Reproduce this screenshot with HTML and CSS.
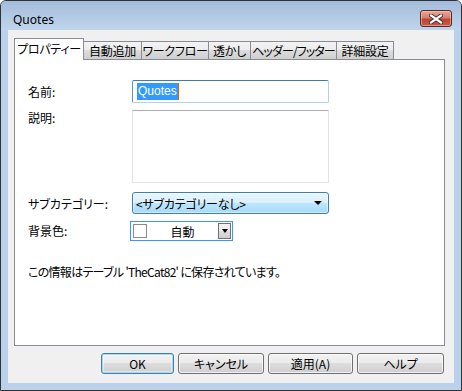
FILE: index.html
```html
<!DOCTYPE html>
<html lang="ja">
<head>
  <meta charset="UTF-8">
  <title>Quotes</title>
  <link rel="stylesheet" href="styles.css">
</head>
<body>
  <div class="window">
    <div class="titlebar">
      <span class="title">Quotes</span>
      <div class="close-btn">
        <svg width="14" height="10" viewBox="0 0 14 10">
          <path d="M2 1.5 L12 8.5 M12 1.5 L2 8.5" stroke="#3b2a2a" stroke-width="4" stroke-linecap="square" fill="none"/>
          <path d="M2 1.5 L12 8.5 M12 1.5 L2 8.5" stroke="#ffffff" stroke-width="2.2" stroke-linecap="square" fill="none"/>
        </svg>
      </div>
    </div>

    <div class="client">
      <div class="tabs">
        <div class="tab active tab-props">プロパティー</div>
        <div class="tab tab-auto">自動追加</div>
        <div class="tab tab-flow">ワークフロー</div>
        <div class="tab tab-mark">透かし</div>
        <div class="tab tab-head">ヘッダー/フッター</div>
        <div class="tab tab-more">詳細設定</div>
      </div>

      <div class="panel">
        <div class="form">
          <div class="row">
            <span class="label">名前:</span>
            <div class="input focused"><span class="selected">Quotes</span><span class="caret"></span></div>
          </div>
          <div class="row row-top">
            <span class="label">説明:</span>
            <div class="textarea"></div>
          </div>
          <div class="row">
            <span class="label label-low">サブカテゴリー:</span>
            <div class="select">
              <span>&lt;サブカテゴリーなし&gt;</span>
              <span class="arrow"></span>
            </div>
          </div>
          <div class="row">
            <span class="label">背景色:</span>
            <div class="color-pick">
              <span class="swatch"></span>
              <span class="color-name">自動</span>
              <span class="drop"><span class="arrow"></span></span>
            </div>
          </div>
        </div>
        <p class="info">この情報はテーブル 'TheCat82' に保存されています。</p>
      </div>

      <div class="buttons">
        <div class="btn btn-ok default">OK</div>
        <div class="btn btn-cancel">キャンセル</div>
        <div class="btn btn-apply">適用(A)</div>
        <div class="btn btn-help">ヘルプ</div>
      </div>
    </div>
  </div>
</body>
</html>
```

FILE: styles.css
```css
body {
  margin: 0;
  padding: 0;
  background-color: #ffffff;
  font-family: "Noto Sans CJK JP", "Noto Sans", sans-serif;
  font-size: 12px;
  color: #000;
}
.window {
  width: 462px;
  height: 391px;
  box-sizing: border-box;
  border: 1px solid #2f3338;
  border-radius: 6px 6px 0 0;
  background-color: #b9d1ea;
  display: flex;
  flex-direction: column;
}
.titlebar {
  height: 29px;
  flex: none;
  display: flex;
  justify-content: space-between;
  align-items: flex-start;
  border-radius: 5px 5px 0 0;
  background: linear-gradient(to bottom, #a3bcd9 0%, #b2c9e3 50%, #bfd5ec 100%);
}
.title {
  font-family: "Noto Sans", sans-serif;
  font-size: 12px;
  line-height: 16px;
  margin: 11px 0 0 12px;
  color: #000;
}
.close-btn {
  width: 32px;
  height: 17px;
  box-sizing: border-box;
  margin: 9px 9px 0 0;
  border: 1px solid #5a2a22;
  border-radius: 3px;
  background: linear-gradient(to bottom, #e8a699 0%, #d7806f 45%, #c0442f 55%, #c65a44 100%);
  box-shadow: inset 0 0 0 1px rgba(255, 210, 200, 0.5);
  display: flex;
  align-items: center;
  justify-content: center;
}
.client {
  flex: 1;
  margin: 0 7px 7px;
  background-color: #f0f0f0;
  padding: 8px 9px 9px 6px;
  display: flex;
  flex-direction: column;
}
.tabs {
  height: 21px;
  flex: none;
  display: flex;
  align-items: flex-end;
}
.tab {
  box-sizing: border-box;
  height: 18px;
  border: 1px solid #898c95;
  border-bottom: none;
  border-right: none;
  background: linear-gradient(to bottom, #f3f3f3 0%, #ebebeb 50%, #dcdcdc 50%, #cfcfcf 100%);
  display: flex;
  align-items: center;
  justify-content: center;
  font-feature-settings: "palt";
  letter-spacing: -0.3px;
  white-space: nowrap;
}
.tab.active {
  height: 22px;
  margin-bottom: -1px;
  position: relative;
  z-index: 1;
  background: #ffffff;
  border-right: 1px solid #898c95;
  padding-bottom: 2px;
}
.tab-props { width: 70px; }
.tab-auto { width: 57px; border-left: none; }
.tab-flow { width: 67px; }
.tab-mark { width: 42px; }
.tab-head { width: 86px; letter-spacing: -0.9px; }
.tab-more { width: 58px; border-right: 1px solid #898c95; }
.panel {
  flex: 1;
  background-color: #ffffff;
  border: 1px solid #898c95;
  display: flex;
  flex-direction: column;
}
.form {
  padding: 20px 0 0 13px;
  display: flex;
  flex-direction: column;
  gap: 7px;
}
.row {
  display: flex;
  align-items: center;
}
.row-top {
  align-items: flex-start;
  margin-bottom: 1px;
}
.label {
  width: 104px;
  flex: none;
  line-height: 16px;
  font-feature-settings: "palt";
}
.label-low {
  padding-top: 3px;
}
.input {
  width: 197px;
  height: 23px;
  box-sizing: border-box;
  border: 1px solid #b4cfe8;
  border-top-color: #3d7bad;
  border-left-color: #5d94c4;
  border-radius: 2px;
  display: flex;
  align-items: center;
  padding-left: 4px;
}
.selected {
  font-family: "Liberation Sans", sans-serif;
  font-size: 12px;
  line-height: 17px;
  background-color: #3399ff;
  color: #ffffff;
  padding: 0 1px;
}
.caret {
  width: 1px;
  height: 17px;
  background-color: #e06000;
}
.textarea {
  width: 197px;
  height: 73px;
  box-sizing: border-box;
  border: 1px solid #e2e3ea;
  border-top-color: #abadb3;
  border-radius: 1px;
}
.select {
  width: 197px;
  height: 22px;
  box-sizing: border-box;
  border: 1px solid #3c7fb1;
  border-radius: 3px;
  background: linear-gradient(to bottom, #eaf6fd 0%, #d9f0fc 50%, #bee6fd 50%, #a7d9f5 100%);
  box-shadow: inset 0 0 0 1px rgba(255, 255, 255, 0.5);
  display: flex;
  align-items: center;
  justify-content: space-between;
  padding: 0 6px 0 3px;
  font-feature-settings: "palt";
  letter-spacing: -0.2px;
  margin-top: 1px;
}
.arrow {
  width: 0;
  height: 0;
  border-left: 4px solid transparent;
  border-right: 4px solid transparent;
  border-top: 4px solid #000;
}
.color-pick {
  width: 103px;
  height: 20px;
  box-sizing: border-box;
  margin-left: -2px;
  border: 1px solid #3399ff;
  background-color: #ffffff;
  display: flex;
  align-items: center;
  padding: 0 1px 0 2px;
}
.swatch {
  width: 14px;
  height: 14px;
  box-sizing: border-box;
  border: 1px solid #8a8a8a;
  background-color: #ffffff;
}
.color-name {
  flex: 1;
  text-align: center;
}
.drop {
  width: 13px;
  height: 16px;
  box-sizing: border-box;
  border: 1px solid #707070;
  background: linear-gradient(to bottom, #f2f2f2 0%, #ebebeb 50%, #dddddd 50%, #cfcfcf 100%);
  display: flex;
  align-items: center;
  justify-content: center;
}
.drop .arrow {
  border-left-width: 3px;
  border-right-width: 3px;
  border-top-width: 4px;
}
.info {
  margin: 23px 0 0 13px;
  line-height: 16px;
  font-feature-settings: "palt";
  letter-spacing: -0.7px;
}
.buttons {
  flex: none;
  display: flex;
  justify-content: flex-end;
  gap: 4px;
  margin-top: 7px;
  margin-right: 1px;
}
.btn {
  height: 21px;
  box-sizing: border-box;
  border: 1px solid #707070;
  border-radius: 3px;
  background: linear-gradient(to bottom, #f2f2f2 0%, #ebebeb 50%, #dddddd 50%, #cfcfcf 100%);
  box-shadow: inset 0 0 0 1px rgba(255, 255, 255, 0.7);
  display: flex;
  align-items: center;
  justify-content: center;
  font-feature-settings: "palt";
}
.btn.default {
  border-color: #3c7fb1;
  box-shadow: inset 0 0 0 1px #a7d9f5, inset 0 0 0 2px rgba(255, 255, 255, 0.4);
}
.btn-ok { width: 73px; }
.btn-cancel { width: 86px; }
.btn-apply { width: 85px; }
.btn-help { width: 87px; }
```
